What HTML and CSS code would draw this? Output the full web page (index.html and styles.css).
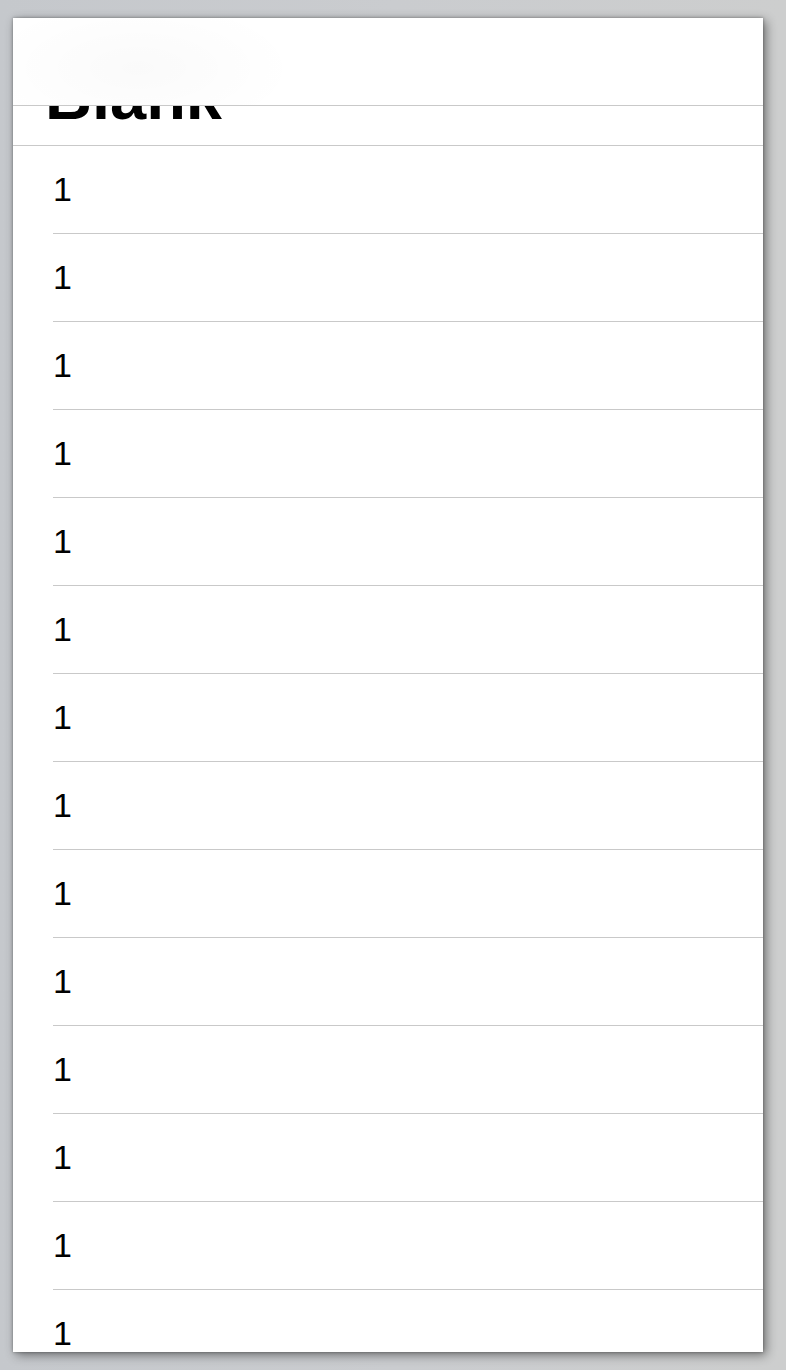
FILE: index.html
```html
<!DOCTYPE html>
<html>
<head>
<meta charset="utf-8">
<link rel="stylesheet" href="styles.css">
</head>
<body>
<div class="device">
  <div class="navbar"></div>
  <div class="header"><h1 class="title">Blank</h1></div>
  <ul class="list">
    <li class="row">1</li>
    <li class="row">1</li>
    <li class="row">1</li>
    <li class="row">1</li>
    <li class="row">1</li>
    <li class="row">1</li>
    <li class="row">1</li>
    <li class="row">1</li>
    <li class="row">1</li>
    <li class="row">1</li>
    <li class="row">1</li>
    <li class="row">1</li>
    <li class="row">1</li>
    <li class="row">1</li>
  </ul>
</div>
</body>
</html>
```

FILE: styles.css
```css
html, body {
  margin: 0;
  padding: 0;
}
body {
  width: 786px;
  height: 1370px;
  overflow: hidden;
  background: linear-gradient(90deg, #c5c8cc 0%, #cacccf 50%, #cdcece 100%);
  font-family: "Liberation Sans", Arial, sans-serif;
}
.device {
  position: relative;
  margin: 18px 0 0 13px;
  width: 750px;
  height: 1334px;
  overflow: hidden;
  background-color: #ffffff;
  box-shadow: 3px 3px 10px rgba(0, 0, 0, 0.45), 0 0 3px rgba(0, 0, 0, 0.35);
}
.navbar {
  position: absolute;
  left: 0;
  top: 0;
  width: 750px;
  height: 87px;
  border-bottom: 1px solid #c9c9c9;
  background-color: #ffffff;
  background-image: radial-gradient(160px 70px at 125px 50px, rgba(0, 0, 0, 0.018), rgba(0, 0, 0, 0));
  z-index: 2;
}
.header {
  height: 128px;
  box-sizing: border-box;
  padding: 46px 0 0 32px;
  border-bottom: 1px solid #c9c9c9;
}
.title {
  margin: 0;
  font-size: 65px;
  line-height: 66px;
  font-weight: bold;
  color: #000;
}
.list {
  list-style: none;
  margin: 0;
  padding: 0 0 0 40px;
}
.row {
  height: 87px;
  line-height: 87px;
  font-size: 34px;
  color: #000;
  border-bottom: 1px solid #c9c9c9;
}
```
